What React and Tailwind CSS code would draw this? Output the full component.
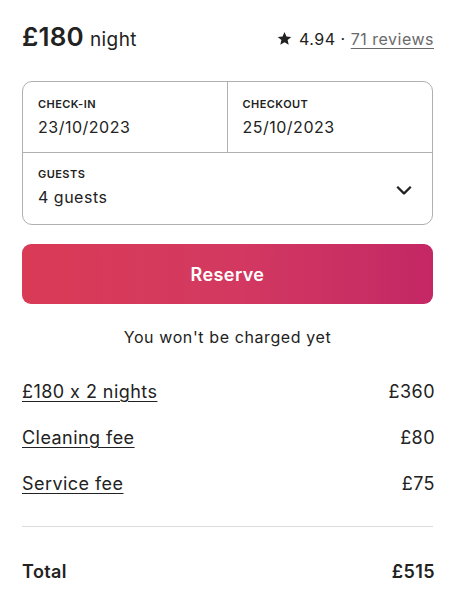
import React from "react";

const font = {
  fontFamily: "Inter, 'Liberation Sans', sans-serif",
  fontFeatureSettings: "'calt' 0",
};

function Row({ label, value }) {
  return (
    <div className="flex items-center justify-between h-[46px] text-[18px] tracking-[0.45px] text-[#222]">
      <span className="underline underline-offset-[3px] decoration-1">{label}</span>
      <span className="-mr-[2px]">{value}</span>
    </div>
  );
}

export default function App() {
  return (
    <div style={font} className="w-[454px] h-[606px] bg-white pl-[22px] pr-[21px] pt-[17px] text-[#222] overflow-hidden">
      {/* Price + rating */}
      <div className="flex items-baseline justify-between h-[32px]">
        <div className="flex items-baseline gap-[6px]">
          <span className="text-[26px] font-semibold tracking-[0.2px]">£180</span>
          <span className="text-[19px] tracking-[0.4px]">night</span>
        </div>
        <div className="flex items-center gap-[5px] text-[16px] tracking-[0.5px] -mr-[1px]">
          <svg width="15" height="15" viewBox="0 0 24 24" className="mr-[2px]">
            <path
              fill="#222"
              d="M12 1.6l3.1 7.1 7.7.7-5.8 5.1 1.7 7.6L12 18.1l-6.7 4 1.7-7.6-5.8-5.1 7.7-.7z"
            />
          </svg>
          <span>4.94</span>
          <span>·</span>
          <span className="text-[#6a6a6a] underline underline-offset-[3px] decoration-1">71 reviews</span>
        </div>
      </div>

      {/* Booking box */}
      <div className="mt-[32px] border border-[#b0b0b0] rounded-[10px] overflow-hidden">
        <div className="grid grid-cols-2 border-b border-[#b0b0b0] h-[71px]">
          <div className="border-r border-[#b0b0b0] px-[15px] pt-[14px]">
            <div className="text-[11px] font-semibold tracking-[0.45px]">CHECK-IN</div>
            <div className="text-[16px] tracking-[0.5px] mt-[2px]">23/10/2023</div>
          </div>
          <div className="px-[15px] pt-[14px]">
            <div className="text-[11px] font-semibold tracking-[0.45px]">CHECKOUT</div>
            <div className="text-[16px] tracking-[0.5px] mt-[2px]">25/10/2023</div>
          </div>
        </div>
        <div className="flex items-center justify-between h-[71px] px-[15px]">
          <div className="-mt-[2px]">
            <div className="text-[11px] font-semibold tracking-[0.45px]">GUESTS</div>
            <div className="text-[16px] tracking-[0.5px] mt-[2px]">4 guests</div>
          </div>
          <svg width="18" height="18" viewBox="0 0 32 32" className="mr-[4px]">
            <path d="M28 12 16.7 23.3a1 1 0 0 1-1.4 0L4 12" fill="none" stroke="#222" strokeWidth="4" />
          </svg>
        </div>
      </div>

      {/* Reserve */}
      <button className="mt-[19px] w-full h-[60px] rounded-[9px] bg-gradient-to-r from-[#d93a55] via-[#d33960] to-[#c42765] text-white text-[18px] font-semibold tracking-[0.4px]">
        Reserve
      </button>

      <div className="text-center text-[16px] tracking-[0.6px] mt-[21px]">You won't be charged yet</div>

      {/* Price breakdown */}
      <div className="mt-[19px]">
        <Row label="£180 x 2 nights" value="£360" />
        <Row label="Cleaning fee" value="£80" />
        <Row label="Service fee" value="£75" />
      </div>

      <div className="mt-[20px] border-t border-[#dddddd]" />

      <div className="flex items-center justify-between mt-[31px] text-[18px] font-semibold tracking-[0.4px]">
        <span>Total</span>
        <span className="-mr-[2px]">£515</span>
      </div>
    </div>
  );
}
